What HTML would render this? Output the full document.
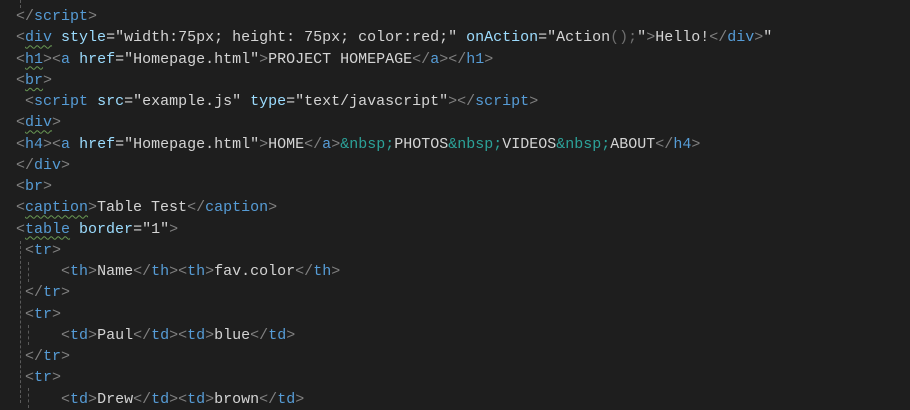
<!DOCTYPE html>
<html><head><style>
body{margin:0;background:#1e1e1e;width:910px;height:401px;overflow:hidden;position:relative}
pre{margin:0;position:absolute;left:16px;top:6px;font:15px/21.25px "Liberation Mono",monospace;color:#d4d4d4}
.b{color:#808080}.t{color:#569cd6}.a{color:#9cdcfe}.e{color:#2ca198}.g{color:#6e6e6e}
.w{text-decoration:underline wavy #6a9955;text-decoration-thickness:1px;text-underline-offset:3px}
.guide{position:absolute;width:0;border-left:1px dashed #5a5a5a}
</style></head><body>
<div class="guide" style="left:20px;top:0;height:8px"></div>
<div class="guide" style="left:20px;top:241px;height:162px"></div>
<div class="guide" style="left:28px;top:262px;height:20px"></div>
<div class="guide" style="left:28px;top:325px;height:20px"></div>
<div class="guide" style="left:28px;top:388px;height:20px"></div>
<pre><span class="b">&lt;/</span><span class="t">script</span><span class="b">&gt;</span>
<span class="b">&lt;</span><span class="t w">div</span> <span class="a">style</span>="width:75px; height: 75px; color:red;" <span class="a">onAction</span>="Action<span class="g">();</span>"<span class="b">&gt;</span>Hello!<span class="b">&lt;/</span><span class="t">div</span><span class="b">&gt;</span>"
<span class="b">&lt;</span><span class="t w">h1</span><span class="b">&gt;&lt;</span><span class="t">a</span> <span class="a">href</span>="Homepage.html"<span class="b">&gt;</span>PROJECT HOMEPAGE<span class="b">&lt;/</span><span class="t">a</span><span class="b">&gt;&lt;/</span><span class="t">h1</span><span class="b">&gt;</span>
<span class="b">&lt;</span><span class="t w">br</span><span class="b">&gt;</span>
 <span class="b">&lt;</span><span class="t">script</span> <span class="a">src</span>="example.js" <span class="a">type</span>="text/javascript"<span class="b">&gt;&lt;/</span><span class="t">script</span><span class="b">&gt;</span>
<span class="b">&lt;</span><span class="t w">div</span><span class="b">&gt;</span>
<span class="b">&lt;</span><span class="t">h4</span><span class="b">&gt;&lt;</span><span class="t">a</span> <span class="a">href</span>="Homepage.html"<span class="b">&gt;</span>HOME<span class="b">&lt;/</span><span class="t">a</span><span class="b">&gt;</span><span class="e">&amp;nbsp;</span>PHOTOS<span class="e">&amp;nbsp;</span>VIDEOS<span class="e">&amp;nbsp;</span>ABOUT<span class="b">&lt;/</span><span class="t">h4</span><span class="b">&gt;</span>
<span class="b">&lt;/</span><span class="t">div</span><span class="b">&gt;</span>
<span class="b">&lt;</span><span class="t">br</span><span class="b">&gt;</span>
<span class="b">&lt;</span><span class="t w">caption</span><span class="b">&gt;</span>Table Test<span class="b">&lt;/</span><span class="t">caption</span><span class="b">&gt;</span>
<span class="b">&lt;</span><span class="t w">table</span> <span class="a">border</span>="1"<span class="b">&gt;</span>
 <span class="b">&lt;</span><span class="t">tr</span><span class="b">&gt;</span>
     <span class="b">&lt;</span><span class="t">th</span><span class="b">&gt;</span>Name<span class="b">&lt;/</span><span class="t">th</span><span class="b">&gt;&lt;</span><span class="t">th</span><span class="b">&gt;</span>fav.color<span class="b">&lt;/</span><span class="t">th</span><span class="b">&gt;</span>
 <span class="b">&lt;/</span><span class="t">tr</span><span class="b">&gt;</span>
 <span class="b">&lt;</span><span class="t">tr</span><span class="b">&gt;</span>
     <span class="b">&lt;</span><span class="t">td</span><span class="b">&gt;</span>Paul<span class="b">&lt;/</span><span class="t">td</span><span class="b">&gt;&lt;</span><span class="t">td</span><span class="b">&gt;</span>blue<span class="b">&lt;/</span><span class="t">td</span><span class="b">&gt;</span>
 <span class="b">&lt;/</span><span class="t">tr</span><span class="b">&gt;</span>
 <span class="b">&lt;</span><span class="t">tr</span><span class="b">&gt;</span>
     <span class="b">&lt;</span><span class="t">td</span><span class="b">&gt;</span>Drew<span class="b">&lt;/</span><span class="t">td</span><span class="b">&gt;&lt;</span><span class="t">td</span><span class="b">&gt;</span>brown<span class="b">&lt;/</span><span class="t">td</span><span class="b">&gt;</span>
</pre>
</body></html>
